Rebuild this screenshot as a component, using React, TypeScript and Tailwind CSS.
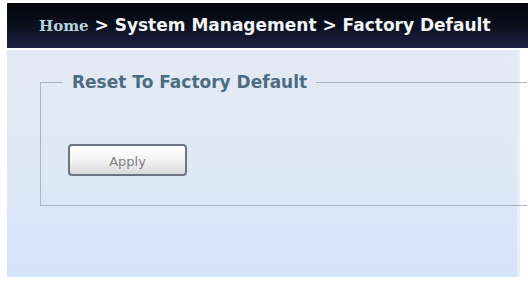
import React from "react";

export default function App() {
  return (
    <div className="w-[528px] h-[281px] bg-white overflow-hidden pt-[3px] pl-[7px]">
      <div className="h-[45px] bg-gradient-to-b from-[#04050a] via-[#0c0f1e] to-[#1c2244] flex items-center pl-[32px] pt-[1px] whitespace-nowrap">
        <span
          className="text-[15px] font-bold text-[#b7d3df]"
          style={{ fontFamily: '"DejaVu Serif", "Liberation Serif", serif' }}
        >
          Home
        </span>
        <span
          className="text-[17px] font-bold text-[#f2f4f8]"
          style={{ fontFamily: '"DejaVu Sans", Verdana, sans-serif' }}
        >
          &nbsp;&gt; System Management &gt; Factory Default
        </span>
      </div>
      <div className="mt-[2px] mr-[8px] h-[227px] bg-gradient-to-b from-[#e4eaf4] via-[#dee8f5] to-[#d4e4fb] border-r-[3px] border-[#e8eefa] pt-[21px]">
        <fieldset className="ml-[33px] -mr-[10px] h-[135px] border border-r-0 border-[#aab4c2] pl-[22px]">
          <legend
            className="px-[9px] text-[17px] leading-[22px] font-bold text-[#4d6c82]"
            style={{ fontFamily: '"DejaVu Sans", Verdana, sans-serif' }}
          >
            Reset To Factory Default
          </legend>
          <button
            className="mt-[51px] ml-[5px] w-[119px] h-[32px] pt-[3px] rounded-[4px] border-2 border-[#6b7480] bg-gradient-to-b from-[#ffffff] via-[#f3f3f3] to-[#d9dadc] text-[13px] text-[#808080]"
            style={{ fontFamily: '"DejaVu Sans", Verdana, sans-serif' }}
          >
            Apply
          </button>
        </fieldset>
      </div>
    </div>
  );
}
